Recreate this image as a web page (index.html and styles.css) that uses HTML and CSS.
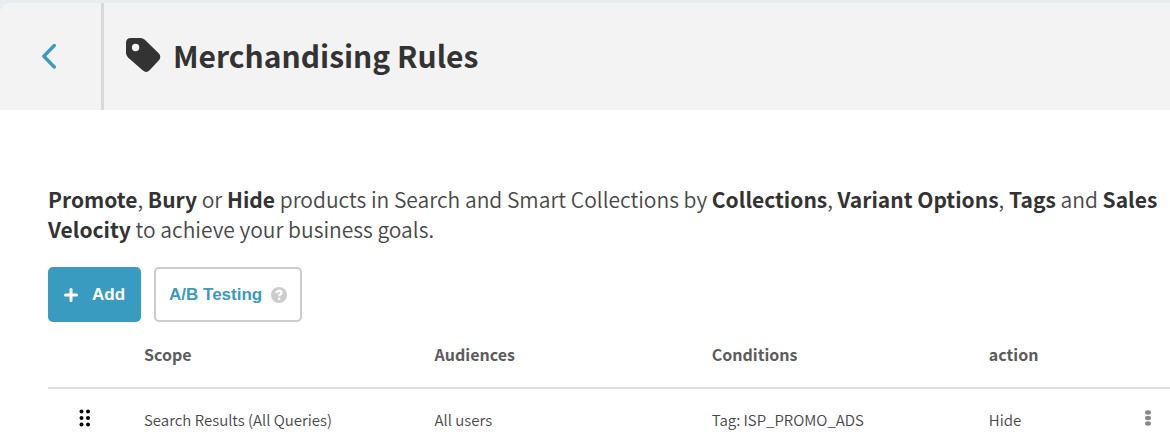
FILE: index.html
```html
<!DOCTYPE html>
<html lang="en">
<head>
<meta charset="utf-8">
<meta name="viewport" content="width=device-width, initial-scale=1">
<title>Merchandising Rules</title>
<link rel="stylesheet" href="styles.css">
</head>
<body>
<header class="page-header">
  <a class="back" href="#" aria-label="Back">
    <svg width="16" height="26" viewBox="0 0 16 26" fill="none" stroke="currentColor" stroke-width="3.400" stroke-linecap="round" stroke-linejoin="round" aria-hidden="true"><path d="M13.300 2.500 2.800 13.200 13.300 24"/></svg>
  </a>
  <div class="heading">
    <svg class="tag" width="36" height="36" viewBox="0 0 36 36" aria-hidden="true"><path fill="currentColor" fill-rule="evenodd" d="M6 1H15.500Q18 1 19.800 2.700L33.700 16.300Q36.800 19.800 33.900 23.300L24.800 33Q21.500 36.600 17.900 33.600L3 20.500Q1 18.600 1 16V6Q1 1 6 1ZM10.600 6.800A3.700 3.700 0 1 0 10.600 14.200 3.700 3.700 0 1 0 10.600 6.800Z"/></svg>
    <h1>Merchandising Rules</h1>
  </div>
</header>
<main class="content">
  <p class="intro"><b>Promote</b>, <b>Bury</b> or <b>Hide</b> products in Search and Smart Collections by <b>Collections</b>, <b>Variant Options</b>, <b>Tags</b> and <b>Sales Velocity</b> to achieve your business goals.</p>
  <div class="actions">
    <button class="btn btn-primary" type="button">
      <svg width="14" height="14" viewBox="0 0 14 14" stroke="currentColor" stroke-width="3" stroke-linecap="round" aria-hidden="true"><path d="M7 1.500V12.500M1.500 7H12.500"/></svg>
      Add
    </button>
    <button class="btn btn-outline" type="button">
      A/B Testing
      <svg width="16" height="16" viewBox="0 0 16 16" fill="none" aria-hidden="true"><circle cx="8" cy="8" r="8" fill="#ccc"/><path d="M5.600 6.100C5.800 2.900 10.600 3 10.500 5.900 10.400 7.500 8 7.400 8 9.300" stroke="#fff" stroke-width="2.400"/><circle cx="8" cy="11.900" r="1.400" fill="#fff"/></svg>
    </button>
  </div>
  <table class="rules">
    <colgroup><col class="col-drag"><col class="col-scope"><col class="col-mid"><col class="col-mid"><col class="col-action"><col class="col-menu"></colgroup>
    <thead>
      <tr><td></td><th scope="col">Scope</th><th scope="col">Audiences</th><th scope="col">Conditions</th><th scope="col">action</th><td></td></tr>
    </thead>
    <tbody>
      <tr>
        <td><button class="icon-btn drag" type="button" aria-label="Reorder rule"><svg width="12" height="18" viewBox="0 0 12 18" fill="currentColor" aria-hidden="true"><circle cx="2.500" cy="2.500" r="2"/><circle cx="9" cy="2.500" r="2"/><circle cx="2.500" cy="9" r="2"/><circle cx="9" cy="9" r="2"/><circle cx="2.500" cy="15.500" r="2"/><circle cx="9" cy="15.500" r="2"/></svg></button></td>
        <td>Search Results (All Queries)</td>
        <td>All users</td>
        <td>Tag: ISP_PROMO_ADS</td>
        <td>Hide</td>
        <td><button class="icon-btn menu" type="button" aria-label="Rule options"><svg width="6" height="16" viewBox="0 0 6 16" fill="currentColor" aria-hidden="true"><ellipse cx="3" cy="2.500" rx="3" ry="2.200"/><ellipse cx="3" cy="8" rx="3" ry="2.200"/><ellipse cx="3" cy="13.500" rx="3" ry="2.200"/></svg></button></td>
      </tr>
    </tbody>
  </table>
</main>
</body>
</html>
```
FILE: styles.css
```css
* {
  box-sizing: border-box;
}

body {
  margin: 0;
  padding-top: 3px;
  background: linear-gradient(#e8edf0 16px, #fff 16px);
  color: #333;
  font-family: "Source Sans Pro", "Noto Sans CJK SC", sans-serif;
}

.page-header {
  display: flex;
  min-height: 107px;
  background: #f3f3f3;
  border-top-left-radius: 10px;
}

.back {
  display: flex;
  align-items: center;
  justify-content: center;
  width: 104px;
  padding: 0 4px 2px 0;
  border-right: 3px solid #d9d9d9;
  color: #3a9bc1;
}

.heading {
  display: flex;
  align-items: center;
  gap: 12px;
  padding: 0 0 4px 21px;
}

h1 {
  margin: 0;
  font-size: 30px;
  line-height: 36px;
  font-weight: 700;
}

.content {
  padding: 74px 0 0 48px;
}

.intro {
  margin: 0;
  color: #484848;
  font-size: 21px;
  line-height: 30px;
  font-weight: 350;
}

.intro b {
  color: #333;
  font-weight: 700;
}

.actions {
  display: flex;
  gap: 13px;
  margin-top: 23px;
}

.btn {
  display: flex;
  align-items: center;
  height: 55px;
  padding: 0 13px;
  border: 2px solid #ccc;
  border-radius: 5px;
  background: #fff;
  color: #3a9bc1;
  font: 700 17px "Liberation Sans", Arial, sans-serif;
  cursor: pointer;
}

.btn-primary {
  gap: 14px;
  padding: 0 14px;
  border-color: #3a9bc1;
  background: #3a9bc1;
  color: #fff;
}

.btn-outline {
  gap: 9px;
}

.rules {
  width: 100%;
  border-collapse: collapse;
  table-layout: fixed;
  color: #484848;
  font-size: 15px;
  line-height: 20px;
  font-weight: 350;
}

.rules th,
.rules td {
  padding: 0;
  text-align: left;
}

.rules thead tr {
  height: 66px;
  border-bottom: 2px solid #e0e0e0;
}

.rules th {
  padding-bottom: 2px;
  color: #5c5c5c;
  font-size: 16px;
  font-weight: 700;
}

.rules tbody tr {
  height: 62px;
}

.col-drag {
  width: 96px;
}

.col-scope {
  width: 25.9%;
}

.col-mid {
  width: 24.7%;
}

.col-menu {
  width: 25px;
}

.icon-btn {
  display: block;
  padding: 0;
  border: 0;
  background: none;
  cursor: pointer;
}

.drag {
  margin-left: 31px;
  color: #000;
}

.menu {
  color: #888;
}
```
